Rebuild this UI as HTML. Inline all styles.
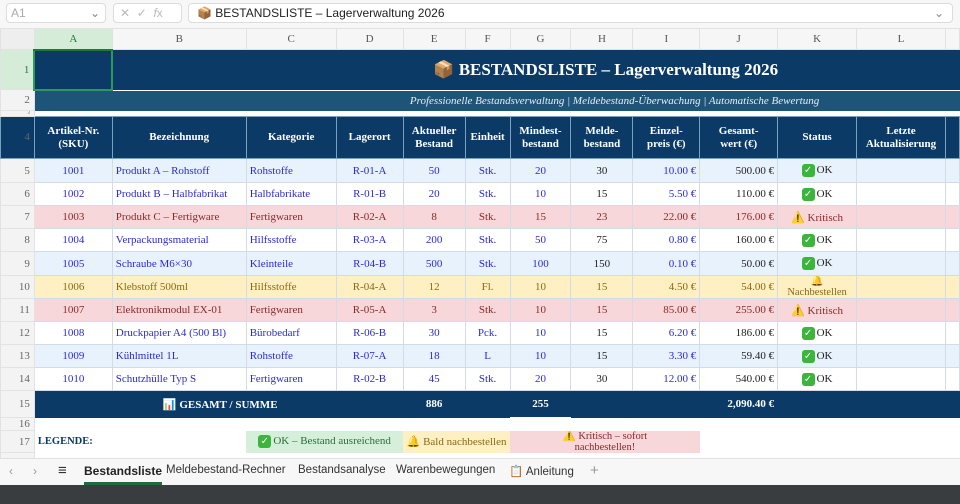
<!DOCTYPE html>
<html><head><meta charset="utf-8"><style>
*{margin:0;padding:0;box-sizing:border-box}
body{width:960px;height:504px;overflow:hidden;background:#fff;font-family:"Liberation Serif",serif;position:relative}
.fb{position:absolute;left:0;top:0;width:960px;height:28px;background:#f7f7f7;font-family:"Liberation Sans",sans-serif}
.box{position:absolute;top:3px;height:20px;border:1px solid #dcdcdc;border-radius:4px;background:#fff;font-size:12px;color:#222;line-height:18px}
table{position:absolute;left:0;top:28px;border-collapse:collapse;table-layout:fixed}
td{border:1px solid #d4dbe6;font-size:11px;text-align:center;overflow:hidden;white-space:nowrap;padding:0 3px;vertical-align:middle}
td.rh{background:#f3f3f3;color:#666;text-align:right;border:1px solid #e2e2e2;padding-right:4px;font-size:11px}
tr.ch td{background:#f6f6f6;color:#555;border-color:#e2e2e2;font-size:11px}
.hd td{background:#0b3a66;color:#fff;font-weight:bold;white-space:nowrap;line-height:13px;border-color:#7aa0c4}
.b{color:#2a2ad8}.r td.d{background:#f8d7da;color:#8a2a2a}.y td.d{background:#fff0c4;color:#8a6a10}
.lb td.d{background:#e8f2fc}.w td.d{background:#fff}
td.k{color:#222}.rt{text-align:right}
.tot td.d{background:#0b3a66;color:#fff;font-weight:bold;border-color:#0b3a66}
.ok{display:inline-block;width:13px;height:13px;background:#3bb53b;border-radius:3px;color:#fff;font-size:10px;line-height:13px;vertical-align:middle;margin-right:2px;font-family:"DejaVu Sans";text-align:center}
.tabs{position:absolute;left:0;top:458px;width:960px;height:27px;background:#f7f7f7;font-family:"Liberation Sans",sans-serif;font-size:12px;color:#333;border-top:1px solid #e0e0e0}
.tabs span{position:absolute;top:5px;white-space:nowrap}
.dark{position:absolute;left:0;top:485px;width:960px;height:19px;background:#3a3d40}
</style></head><body>
<div class="fb">
<div class="box" style="left:6px;width:100px;color:#aaa;padding-left:4px">A1<span style="position:absolute;right:5px;color:#888">⌄</span></div>
<div class="box" style="left:113px;width:69px;color:#bbb;padding-left:6px">✕ &nbsp;✓ &nbsp;<i>f</i>x</div>
<div class="box" style="left:188px;width:765px;padding-left:8px">📦 BESTANDSLISTE – Lagerverwaltung 2026<span style="position:absolute;right:8px;color:#888">⌄</span></div>
</div>
<table>
<colgroup><col style="width:34px"><col style="width:78px"><col style="width:134px"><col style="width:90px"><col style="width:67px"><col style="width:62px"><col style="width:45px"><col style="width:61px"><col style="width:62px"><col style="width:67px"><col style="width:78px"><col style="width:79px"><col style="width:89px"><col style="width:14px"></colgroup>
<tr class="ch" style="height:21px"><td style="background:#eee"></td><td style="background:#d5ecd9;color:#1f7a3a;border-bottom:2px solid #1f7a3a">A</td><td>B</td><td>C</td><td>D</td><td>E</td><td>F</td><td>G</td><td>H</td><td>I</td><td>J</td><td>K</td><td>L</td><td></td></tr>
<tr style="height:40px"><td class="rh" style="background:#d5ecd9;color:#1f7a3a">1</td><td style="background:#0b3a66;border:2px solid #2e9a5a"></td><td colspan="12" style="background:#0b3a66;color:#fff;font-size:17px;font-weight:bold;border:none;text-align:left;padding-left:320px">📦 BESTANDSLISTE – Lagerverwaltung 2026</td></tr>
<tr style="height:21px"><td class="rh">2</td><td colspan="13" style="background:#1d5578;color:#e6eef5;font-style:italic;font-size:11px;border:none;text-align:left;padding-left:375px">Professionelle Bestandsverwaltung | Meldebestand-Überwachung | Automatische Bewertung</td></tr>
<tr style="height:6px"><td class="rh" style="font-size:5px">3</td><td colspan="13" style="border:none"></td></tr>
<tr class="hd" style="height:42px"><td class="rh" style="color:#666;font-weight:normal">4</td><td>Artikel-Nr.<br>(SKU)</td><td>Bezeichnung</td><td>Kategorie</td><td>Lagerort</td><td>Aktueller<br>Bestand</td><td>Einheit</td><td>Mindest-<br>bestand</td><td>Melde-<br>bestand</td><td>Einzel-<br>preis (€)</td><td>Gesamt-<br>wert (€)</td><td>Status</td><td>Letzte<br>Aktualisierung</td><td></td></tr>
<tr class="lb b" style="height:24px"><td class="rh">5</td><td class="d">1001</td><td class="d" style="text-align:left">Produkt A – Rohstoff</td><td class="d" style="text-align:left">Rohstoffe</td><td class="d">R-01-A</td><td class="d">50</td><td class="d">Stk.</td><td class="d">20</td><td class="d k">30</td><td class="d rt">10.00 €</td><td class="d rt k">500.00 €</td><td class="d k"><span class="ok">✓</span>OK</td><td class="d"></td><td class="d"></td></tr>
<tr class="w b" style="height:23px"><td class="rh">6</td><td class="d">1002</td><td class="d" style="text-align:left">Produkt B – Halbfabrikat</td><td class="d" style="text-align:left">Halbfabrikate</td><td class="d">R-01-B</td><td class="d">20</td><td class="d">Stk.</td><td class="d">10</td><td class="d k">15</td><td class="d rt">5.50 €</td><td class="d rt k">110.00 €</td><td class="d k"><span class="ok">✓</span>OK</td><td class="d"></td><td class="d"></td></tr>
<tr class="r" style="height:23px"><td class="rh">7</td><td class="d">1003</td><td class="d" style="text-align:left">Produkt C – Fertigware</td><td class="d" style="text-align:left">Fertigwaren</td><td class="d">R-02-A</td><td class="d">8</td><td class="d">Stk.</td><td class="d">15</td><td class="d">23</td><td class="d rt">22.00 €</td><td class="d rt">176.00 €</td><td class="d">⚠️ Kritisch</td><td class="d"></td><td class="d"></td></tr>
<tr class="w b" style="height:23px"><td class="rh">8</td><td class="d">1004</td><td class="d" style="text-align:left">Verpackungsmaterial</td><td class="d" style="text-align:left">Hilfsstoffe</td><td class="d">R-03-A</td><td class="d">200</td><td class="d">Stk.</td><td class="d">50</td><td class="d k">75</td><td class="d rt">0.80 €</td><td class="d rt k">160.00 €</td><td class="d k"><span class="ok">✓</span>OK</td><td class="d"></td><td class="d"></td></tr>
<tr class="lb b" style="height:24px"><td class="rh">9</td><td class="d">1005</td><td class="d" style="text-align:left">Schraube M6×30</td><td class="d" style="text-align:left">Kleinteile</td><td class="d">R-04-B</td><td class="d">500</td><td class="d">Stk.</td><td class="d">100</td><td class="d k">150</td><td class="d rt">0.10 €</td><td class="d rt k">50.00 €</td><td class="d k"><span class="ok">✓</span>OK</td><td class="d"></td><td class="d"></td></tr>
<tr class="y" style="height:23px"><td class="rh">10</td><td class="d">1006</td><td class="d" style="text-align:left">Klebstoff 500ml</td><td class="d" style="text-align:left">Hilfsstoffe</td><td class="d">R-04-A</td><td class="d">12</td><td class="d">Fl.</td><td class="d">10</td><td class="d">15</td><td class="d rt">4.50 €</td><td class="d rt">54.00 €</td><td class="d" style="line-height:11px;vertical-align:bottom;font-size:10.5px">🔔<br>Nachbestellen</td><td class="d"></td><td class="d"></td></tr>
<tr class="r" style="height:23px"><td class="rh">11</td><td class="d">1007</td><td class="d" style="text-align:left">Elektronikmodul EX-01</td><td class="d" style="text-align:left">Fertigwaren</td><td class="d">R-05-A</td><td class="d">3</td><td class="d">Stk.</td><td class="d">10</td><td class="d">15</td><td class="d rt">85.00 €</td><td class="d rt">255.00 €</td><td class="d">⚠️ Kritisch</td><td class="d"></td><td class="d"></td></tr>
<tr class="w b" style="height:23px"><td class="rh">12</td><td class="d">1008</td><td class="d" style="text-align:left">Druckpapier A4 (500 Bl)</td><td class="d" style="text-align:left">Bürobedarf</td><td class="d">R-06-B</td><td class="d">30</td><td class="d">Pck.</td><td class="d">10</td><td class="d k">15</td><td class="d rt">6.20 €</td><td class="d rt k">186.00 €</td><td class="d k"><span class="ok">✓</span>OK</td><td class="d"></td><td class="d"></td></tr>
<tr class="lb b" style="height:23px"><td class="rh">13</td><td class="d">1009</td><td class="d" style="text-align:left">Kühlmittel 1L</td><td class="d" style="text-align:left">Rohstoffe</td><td class="d">R-07-A</td><td class="d">18</td><td class="d">L</td><td class="d">10</td><td class="d k">15</td><td class="d rt">3.30 €</td><td class="d rt k">59.40 €</td><td class="d k"><span class="ok">✓</span>OK</td><td class="d"></td><td class="d"></td></tr>
<tr class="w b" style="height:23px"><td class="rh">14</td><td class="d">1010</td><td class="d" style="text-align:left">Schutzhülle Typ S</td><td class="d" style="text-align:left">Fertigwaren</td><td class="d">R-02-B</td><td class="d">45</td><td class="d">Stk.</td><td class="d">20</td><td class="d k">30</td><td class="d rt">12.00 €</td><td class="d rt k">540.00 €</td><td class="d k"><span class="ok">✓</span>OK</td><td class="d"></td><td class="d"></td></tr>
<tr class="tot" style="height:27px"><td class="rh">15</td><td class="d" colspan="4" style="text-align:left;padding-left:128px">📊 GESAMT / SUMME</td><td class="d">886</td><td class="d"></td><td class="d" style="border-bottom:2px solid #fff">255</td><td class="d"></td><td class="d"></td><td class="d rt">2,090.40 €</td><td class="d"></td><td class="d"></td><td class="d"></td></tr>
<tr style="height:13px"><td class="rh">16</td><td colspan="13" style="border:none"></td></tr>
<tr style="height:22px"><td class="rh">17</td><td style="border:none;text-align:left;font-weight:bold;color:#0b3a66;font-size:10.5px">LEGENDE:</td><td style="border:none"></td><td colspan="2" style="background:#d6efdb;color:#2b6e3a;border:none"><span class="ok">✓</span>OK – Bestand ausreichend</td><td colspan="2" style="background:#fff0c4;color:#8a6a10;border:none">🔔 Bald nachbestellen</td><td colspan="3" style="background:#f8d7da;color:#8a2a2a;border:none;white-space:normal;line-height:11px;font-size:10.5px;padding:0 30px">⚠️ Kritisch – sofort nachbestellen!</td><td colspan="5" style="border:none"></td></tr>
<tr style="height:8px"><td class="rh"></td><td colspan="13" style="border:none"></td></tr>
</table>
<div class="tabs">
<span style="left:9px;color:#999">‹</span><span style="left:33px;color:#999">›</span><span style="left:58px;font-size:15px;top:3px">≡</span>
<span style="left:84px;font-weight:bold;color:#222;border-bottom:3px solid #1f6b3a;padding-bottom:4px;font-size:12px">Bestandsliste</span>
<span style="left:166px;font-size:11.5px">Meldebestand-Rechner</span><span style="left:298px;font-size:11.5px">Bestandsanalyse</span><span style="left:396px;font-size:11.5px">Warenbewegungen</span><span style="left:509px;font-size:11.5px">📋 Anleitung</span><span style="left:590px;color:#999;font-size:15px;top:3px">+</span>
</div>
<div class="dark"></div>
</body></html>
